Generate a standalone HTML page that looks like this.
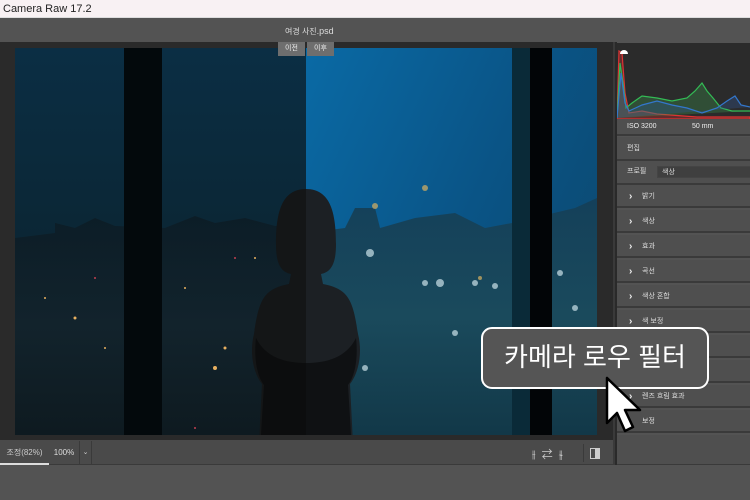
<!DOCTYPE html><html><head><meta charset="utf-8"><style>
*{margin:0;padding:0;box-sizing:border-box}
body{width:750px;height:500px;overflow:hidden;background:#535353;font-family:"Liberation Sans","Noto Sans CJK KR",sans-serif;position:relative}
.a{position:absolute}
.row{position:absolute;left:617px;width:133px;height:23px;background:#4f4f4f;border-bottom:2px solid #3a3a3a;color:#ddd;font-size:7px;line-height:23px;padding-left:25px}
.row b{position:absolute;left:12px;top:0;font-size:10px;color:#eee;font-weight:bold}
</style></head><body>
<div class="a" style="left:0;top:0;width:750px;height:18px;background:#f8f1f3;border-bottom:1px solid #ddd;font-size:11px;line-height:18px;padding-left:3px;color:#222">Camera Raw 17.2</div>
<div class="a" style="left:0;top:19px;width:750px;height:23px;background:#535353"></div>
<div class="a" style="left:285px;top:26px;font-size:8px;color:#ddd">여경 사진<span style="font-size:9px">.psd</span></div>
<div class="a" style="left:0;top:42px;width:615px;height:398px;background:#2a2a2a"></div>
<svg class="a" style="left:15px;top:48px" width="582" height="387" viewBox="0 0 582 387">
<defs>
<linearGradient id="l" x1="0" y1="0" x2="0" y2="1"><stop offset="0" stop-color="#0b2e44"/><stop offset="0.45" stop-color="#0b2736"/><stop offset="1" stop-color="#0a1c26"/></linearGradient>
<linearGradient id="r" x1="0" y1="0" x2="1" y2="0.6"><stop offset="0" stop-color="#0a6aa5"/><stop offset="0.6" stop-color="#0a5486"/><stop offset="1" stop-color="#0c4a72"/></linearGradient>
<linearGradient id="lc" x1="0" y1="0" x2="0" y2="1"><stop offset="0" stop-color="#0c1d27"/><stop offset="0.5" stop-color="#12232c"/><stop offset="1" stop-color="#0e1a20"/></linearGradient>
<linearGradient id="rc" x1="0" y1="0" x2="0" y2="1"><stop offset="0" stop-color="#14405a"/><stop offset="0.5" stop-color="#1a4a5c"/><stop offset="1" stop-color="#123848"/></linearGradient>
</defs>
<rect width="291" height="387" fill="url(#l)"/>
<rect x="291" width="291" height="387" fill="url(#r)"/>
<path d="M0 190 L40 185 L40 175 L60 180 L80 170 L100 178 L150 180 L180 168 L200 175 L230 170 L260 178 L291 176 V387 H0z" fill="url(#lc)"/>
<path d="M291 185 L330 180 L340 160 L360 160 L365 180 L400 170 L440 165 L470 180 L497 175 L560 160 L582 150 V387 H291z" fill="url(#rc)"/>
<g fill="#e8b060"><circle cx="60" cy="270" r="1.5"/><circle cx="30" cy="250" r="1"/><circle cx="90" cy="300" r="1"/><circle cx="200" cy="320" r="2"/><circle cx="240" cy="210" r="1"/><circle cx="170" cy="240" r="1"/><circle cx="130" cy="290" r="1"/><circle cx="210" cy="300" r="1.5"/></g>
<g fill="#c04050"><circle cx="80" cy="230" r="1"/><circle cx="220" cy="210" r="1"/><circle cx="180" cy="380" r="1"/></g>
<g fill="#c0d8e0" opacity=".75"><circle cx="355" cy="205" r="4"/><circle cx="410" cy="235" r="3"/><circle cx="425" cy="235" r="4"/><circle cx="460" cy="235" r="3"/><circle cx="480" cy="238" r="3"/><circle cx="560" cy="260" r="3"/><circle cx="545" cy="225" r="3"/><circle cx="350" cy="320" r="3"/><circle cx="440" cy="285" r="3"/></g>
<g fill="#d8b060" opacity=".7"><circle cx="360" cy="158" r="3"/><circle cx="410" cy="140" r="3"/><circle cx="465" cy="230" r="2"/></g>
<rect x="109" width="38" height="387" fill="#03090c"/>
<rect x="497" width="40" height="387" fill="#0a2a38"/><rect x="515" width="22" height="387" fill="#020507"/>
<path d="M291 141c-25 0-30 25-30 55 0 20 5 28 15 30l-2 10c-25 5-30 15-35 50-5 20 0 40 8 50l-3 60h47z" fill="#141617"/>
<path d="M291 141c25 0 30 25 30 55 0 20-5 28-15 30l2 10c25 5 30 15 35 50 5 20 0 40-8 50l3 60h-47z" fill="#1c2024"/>
<path d="M241 290c10 20 30 25 50 25v72h-45l3-50c-8-10-10-30-8-47z" fill="#0c0d0e"/>
<path d="M341 290c-10 20-30 25-50 25v72h45l-3-50c8-10 10-30 8-47z" fill="#0f1113"/>
</svg>
<div class="a" style="left:278px;top:42px;width:27px;height:14px;background:#6e6e6e;color:#eee;font-size:7px;text-align:center;line-height:14px">이전</div>
<div class="a" style="left:307px;top:42px;width:27px;height:14px;background:#6e6e6e;color:#eee;font-size:7px;text-align:center;line-height:14px">이후</div>
<div class="a" style="left:0;top:440px;width:615px;height:25px;background:#4a4a4a;border-bottom:1px solid #3a3a3a"></div>
<div class="a" style="left:0;top:441px;width:49px;height:24px;color:#ccc;font-size:8px;line-height:24px;text-align:center;border-bottom:2px solid #ddd">조정(82%)</div>
<div class="a" style="left:49px;top:441px;width:31px;height:24px;color:#ddd;font-size:8px;line-height:24px;text-align:center;border-right:1px solid #3a3a3a">100%</div>
<div class="a" style="left:80px;top:441px;width:12px;height:24px;color:#ccc;font-size:7px;line-height:24px;text-align:center;border-right:1px solid #3a3a3a">⌄</div>
<div class="a" style="left:532px;top:446px;color:#ccc;font-size:11px;letter-spacing:6px">⫲⇄⫳</div>
<div class="a" style="left:583px;top:444px;width:1px;height:18px;background:#3a3a3a"></div>
<div class="a" style="left:590px;top:448px;width:10px;height:11px;border:1px solid #ccc;border-right:5px solid #ccc"></div>
<div class="a" style="left:613px;top:42px;width:2px;height:423px;background:#3a3a3a"></div>
<div class="a" style="left:615px;top:42px;width:2px;height:423px;background:#2a2a2a"></div>
<div class="a" style="left:617px;top:43px;width:133px;height:76px;background:#2b2b2b"></div>
<svg class="a" style="left:617px;top:43px" width="133" height="76">
<path d="M0 75 L2 8 L5 10 L8 50 L12 70 L25 68 L40 71 L80 74 L133 74 V76 H0z" fill="rgba(200,50,50,.35)" stroke="#d33" stroke-width="1.2"/>
<path d="M0 75 L3 20 L6 40 L9 65 L15 60 L25 53 L40 55 L55 58 L70 55 L78 48 L85 40 L90 48 L96 55 L104 65 L115 68 L133 68" fill="rgba(60,160,80,.3)" stroke="#3b5" stroke-width="1.2"/>
<path d="M0 75 L4 30 L8 60 L12 68 L25 62 L40 58 L55 62 L70 65 L85 70 L100 65 L110 58 L118 53 L124 62 L133 64" fill="rgba(50,90,160,.3)" stroke="#37c" stroke-width="1.2"/>
<path d="M3 11 a4 4 0 0 1 8 0 z" fill="#fff"/>
</svg>
<div class="row" style="top:119px;height:17px;line-height:15px;font-size:7px;color:#eee;padding-left:10px">ISO 3200<span style="position:absolute;left:75px">50 mm</span></div>
<div class="row" style="top:137px;height:24px;line-height:24px;padding-left:10px">편집</div>
<div class="row" style="top:161px;height:24px;line-height:22px;padding-left:10px">프로필<span style="position:absolute;left:40px;top:5px;width:100px;height:12px;background:#3f3f3f;line-height:12px;padding-left:4px;border:1px solid #444">색상</span></div>
<div class="row" style="top:185px"><b>›</b>밝기</div>
<div class="row" style="top:210px"><b>›</b>색상</div>
<div class="row" style="top:235px"><b>›</b>효과</div>
<div class="row" style="top:260px"><b>›</b>곡선</div>
<div class="row" style="top:285px"><b>›</b>색상 혼합</div>
<div class="row" style="top:310px"><b>›</b>색 보정</div>
<div class="row" style="top:335px"></div>
<div class="row" style="top:360px"></div>
<div class="row" style="top:385px"><b>›</b>렌즈 흐림 효과</div>
<div class="row" style="top:410px">보정</div>
<div class="a" style="left:617px;top:435px;width:133px;height:30px;background:#4f4f4f;border-bottom:1px solid #3a3a3a"></div>
<div class="a" style="left:481px;top:327px;width:228px;height:62px;background:#555;border:2px solid #fff;border-radius:11px;color:#fff;font-size:26px;text-align:center;line-height:56px">카메라 로우 필터</div>
<svg class="a" style="left:600px;top:375px" width="50" height="65"><path d="M7 3 L7 48 L17 38 L25 56 L33 52 L25 35 L40 35 Z" fill="#fff" stroke="#000" stroke-width="2.5" stroke-linejoin="round"/></svg>
</body></html>
